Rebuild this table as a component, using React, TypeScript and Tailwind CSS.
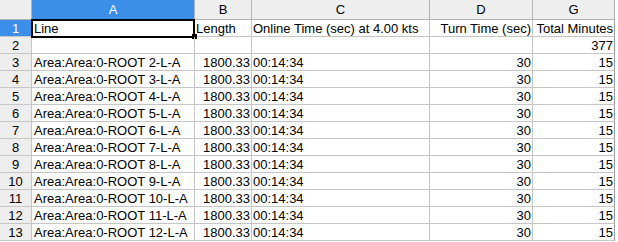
const cols = ["A", "B", "C", "D", "G"];

type Row = { a: string; b: string; c: string; d: string; g: string };

const rows: Row[] = [
  { a: "Line", b: "Length", c: "Online Time (sec) at 4.00 kts", d: "Turn Time (sec)", g: "Total Minutes" },
  { a: "", b: "", c: "", d: "", g: "377" },
];
for (let i = 2; i <= 12; i++) {
  rows.push({ a: `Area:Area:0-ROOT ${i}-L-A`, b: "1800.33", c: "00:14:34", d: "30", g: "15" });
}

const cell = "h-[17px] border-r border-b border-[#c6c6c6] leading-[17px] whitespace-nowrap overflow-visible";

const App = () => {
  return (
    <div
      className="w-[618px] h-[242px] bg-white overflow-hidden text-[13px] text-black"
      style={{ fontFamily: '"Liberation Sans", Arial, sans-serif' }}
    >
      <div className="grid grid-cols-[32px_163px_57px_178px_103px_82px]">
        {/* column headers */}
        <div className="h-[20px] bg-[#eeeeee] border-r border-b border-[#b4b4b4]" />
        {cols.map((c, i) => (
          <div
            key={c}
            className={`h-[20px] border-r border-b border-[#b4b4b4] flex items-center justify-center ${
              i === 0 ? "bg-[#3b8fe9] text-white" : "bg-[#eeeeee]"
            }`}
          >
            {c}
          </div>
        ))}

        {rows.map((r, idx) => {
          const first = idx === 0;
          return [
            <div
              key={`h${idx}`}
              className={`${cell} border-[#b4b4b4] text-center ${
                first ? "bg-[#3b8fe9] text-white" : "bg-[#eeeeee]"
              }`}
            >
              {idx + 1}
            </div>,
            <div key={`a${idx}`} className={`${cell} pl-[2px] relative`}>
              {r.a}
              {first && (
                <>
                  <div className="absolute left-[-1px] top-[-1px] w-[164px] h-[19px] border-2 border-black pointer-events-none" />
                  <div className="absolute right-[-3px] bottom-[-3px] w-[5px] h-[5px] bg-black" />
                </>
              )}
            </div>,
            <div key={`b${idx}`} className={`${cell} ${first ? "pl-[1px]" : "text-right pr-[1px]"}`}>
              {r.b}
            </div>,
            <div key={`c${idx}`} className={`${cell} pl-[1px]`}>
              {r.c}
            </div>,
            <div key={`d${idx}`} className={`${cell} text-right pr-[1px] ${first ? "pr-[0px]" : ""}`}>
              {r.d}
            </div>,
            <div key={`g${idx}`} className={`${cell} text-right pr-[1px] border-r-[#9a9a9a]`}>
              {r.g}
            </div>,
          ];
        })}
      </div>
    </div>
  );
};

export default App;
